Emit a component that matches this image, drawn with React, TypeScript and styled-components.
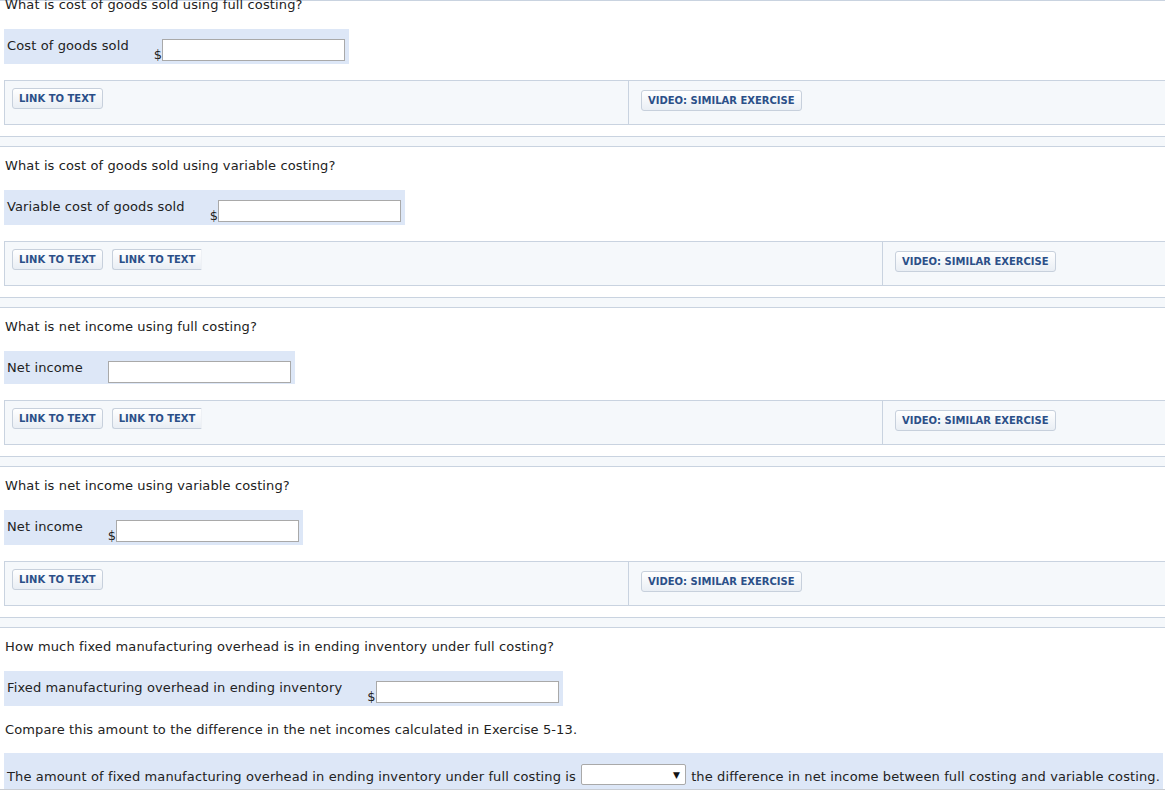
import React from 'react';
import styled, { createGlobalStyle } from 'styled-components';

const GlobalStyle = createGlobalStyle`
  html, body {
    margin: 0;
    padding: 0;
    background: #ffffff;
    overflow: hidden;
  }
  body {
    font-family: Verdana, "DejaVu Sans", sans-serif;
    font-size: 13px;
    letter-spacing: 0.12px;
    color: #222222;
  }
`;

const Page = styled.div`
  width: 1165px;
  overflow: hidden;
`;

const TopRule = styled.div`
  height: 0;
  border-top: 1px solid #c9d3e0;
`;

const Question = styled.p<{ $first?: boolean }>`
  margin: ${({ $first }) => ($first ? '-4px' : '11px')} 0 0 5px;
  line-height: 16px;
`;

const AnswerBox = styled.div<{ $tight?: boolean }>`
  display: inline-flex;
  align-items: flex-start;
  margin: 16px 0 0 4px;
  padding: 10px 4px ${({ $tight }) => ($tight ? '1px' : '3px')} 3px;
  background: #dde7f7;
`;

const FieldLabel = styled.span`
  margin-top: -1px;
  margin-right: 25px;
  line-height: 16px;
  white-space: nowrap;
`;

const Currency = styled.span`
  align-self: flex-end;
  margin-bottom: -2px;
  line-height: 16px;
`;

const TextInput = styled.input`
  box-sizing: border-box;
  width: 183px;
  height: 22px;
  margin: 0;
  padding: 1px 3px;
  border: 1px solid #a9a9a9;
  background: #ffffff;
  font: inherit;
`;

const LinksBar = styled.div<{ $split: number }>`
  box-sizing: border-box;
  display: grid;
  grid-template-columns: ${({ $split }) => $split}px 1fr;
  height: 45px;
  margin: 16px 0 0 4px;
  border: 1px solid #c9d3e0;
  border-right: none;
  background: #f5f8fb;
`;

const LinkCell = styled.div<{ $right?: boolean }>`
  display: flex;
  align-items: flex-start;
  gap: 9px;
  padding: ${({ $right }) => ($right ? '9px 12px' : '7px 7px')};
  border-left: ${({ $right }) => ($right ? '1px solid #c9d3e0' : 'none')};
`;

const LinkButton = styled.button<{ $cut?: boolean }>`
  box-sizing: border-box;
  height: 21px;
  margin: 0;
  padding: 0 6px;
  border: 1px solid #c7d0dc;
  border-right-color: ${({ $cut }) => ($cut ? '#eef1f5' : '#c7d0dc')};
  border-radius: ${({ $cut }) => ($cut ? '3px 0 0 3px' : '3px')};
  background: linear-gradient(#ffffff, #e9eef4);
  color: #2b4f88;
  font-family: Verdana, "DejaVu Sans", sans-serif;
  font-size: 10px;
  font-weight: bold;
  letter-spacing: 0;
  white-space: nowrap;
  cursor: pointer;
`;

const Divider = styled.div`
  box-sizing: border-box;
  height: 11px;
  margin-top: 11px;
  border-top: 1px solid #c9d3e0;
  border-bottom: 1px solid #c9d3e0;
  background: #f5f8fb;
`;

const Note = styled.p`
  margin: 16px 0 0 5px;
  line-height: 16px;
`;

const SentenceBox = styled.div`
  box-sizing: border-box;
  display: flex;
  align-items: center;
  gap: 5px;
  width: 1159px;
  height: 36px;
  margin: 15px 0 0 4px;
  padding: 7px 3px 0;
  background: #dde7f7;
  white-space: nowrap;
`;

const SentenceText = styled.span`
  padding-top: 4px;
  line-height: 16px;
`;

const Dropdown = styled.div`
  box-sizing: border-box;
  display: flex;
  align-items: center;
  justify-content: flex-end;
  width: 109px;
  height: 21px;
  padding-right: 5px;
  border: 1px solid #a9a9a9;
  border-radius: 2px;
  background: #ffffff;
  color: #111111;
  font-size: 9px;
`;

const BottomRule = styled.div`
  border-top: 1px solid #c9cdd3;
`;

type Field = {
  question: string;
  label: string;
  dollar: boolean;
  links: number;
  split: number;
};

const fields: Field[] = [
  { question: 'What is cost of goods sold using full costing?', label: 'Cost of goods sold', dollar: true, links: 1, split: 623 },
  { question: 'What is cost of goods sold using variable costing?', label: 'Variable cost of goods sold', dollar: true, links: 2, split: 877 },
  { question: 'What is net income using full costing?', label: 'Net income', dollar: false, links: 2, split: 877 },
  { question: 'What is net income using variable costing?', label: 'Net income', dollar: true, links: 1, split: 623 },
];

const Answer: React.FC<{ label: string; dollar: boolean }> = ({ label, dollar }) => (
  <AnswerBox $tight={!dollar}>
    <FieldLabel>{label}</FieldLabel>
    {dollar && <Currency>$</Currency>}
    <TextInput type="text" />
  </AnswerBox>
);

const App: React.FC = () => (
  <Page>
    <GlobalStyle />
    <TopRule />
    {fields.map((f, i) => (
      <section key={i}>
        <Question $first={i === 0}>{f.question}</Question>
        <Answer label={f.label} dollar={f.dollar} />
        <LinksBar $split={f.split}>
          <LinkCell>
            <LinkButton>LINK TO TEXT</LinkButton>
            {f.links > 1 && <LinkButton $cut>LINK TO TEXT</LinkButton>}
          </LinkCell>
          <LinkCell $right>
            <LinkButton>VIDEO: SIMILAR EXERCISE</LinkButton>
          </LinkCell>
        </LinksBar>
        <Divider />
      </section>
    ))}
    <section>
      <Question>How much fixed manufacturing overhead is in ending inventory under full costing?</Question>
      <Answer label="Fixed manufacturing overhead in ending inventory" dollar />
      <Note>Compare this amount to the difference in the net incomes calculated in Exercise 5-13.</Note>
      <SentenceBox>
        <SentenceText>The amount of fixed manufacturing overhead in ending inventory under full costing is</SentenceText>
        <Dropdown>▼</Dropdown>
        <SentenceText>the difference in net income between full costing and variable costing.</SentenceText>
      </SentenceBox>
      <BottomRule />
    </section>
  </Page>
);

export default App;
